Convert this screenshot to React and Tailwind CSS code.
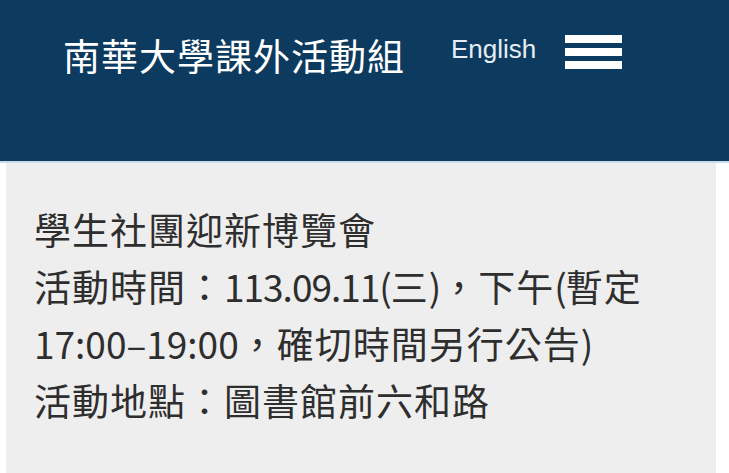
export default function App() {
  const cjk = { fontFamily: '"Noto Sans CJK TC", "Noto Sans", sans-serif' };

  return (
    <div className="w-[729px] h-[473px] overflow-hidden bg-white" style={cjk}>
      {/* top bar */}
      <header className="h-[161px] bg-[#0d3a5f] flex items-start pl-[63px]">
        <h1 className="mt-[37px] text-[37px] leading-none text-white font-normal tracking-[1px]">
          南華大學課外活動組
        </h1>
        <a
          className="ml-[46px] mt-[36px] text-[26px] leading-none text-[#e6eef5]"
          style={{ fontFamily: '"Liberation Sans", Arial, sans-serif' }}
        >
          English
        </a>
        <button className="ml-[29px] mt-[35px] w-[57px] flex flex-col gap-[5px]">
          <span className="block h-[8px] bg-white"></span>
          <span className="block h-[8px] bg-white"></span>
          <span className="block h-[8px] bg-white"></span>
        </button>
      </header>

      {/* notice panel */}
      <div className="h-[2px] bg-[#cadcec]"></div>
      <section className="ml-[6px] w-[710px] h-[310px] bg-[#eeeeee] pl-[28px] pt-[38px]">
        <p className="text-[37px] leading-[57px] text-[#2e2e2e] tracking-[1px]">
          學生社團迎新博覽會
          <br />
          活動時間：<span className="tracking-[-1px]">113.09.11(</span>三
          <span className="tracking-[-1px]">)</span>，下午<span className="tracking-[-1px]">(</span>暫定
          <br />
          <span className="tracking-normal">17:00–19:00</span>，確切時間另行公告<span className="tracking-normal">)</span>
          <br />
          活動地點：圖書館前六和路
        </p>
      </section>
    </div>
  );
}
